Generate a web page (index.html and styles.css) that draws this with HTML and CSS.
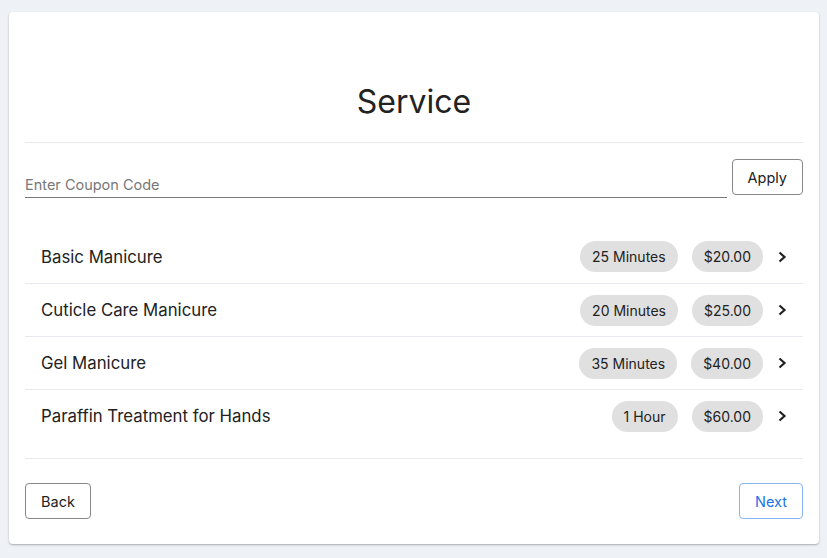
FILE: index.html
```html
<!DOCTYPE html>
<html lang="en">
<head>
    <meta charset="UTF-8">
    <meta name="viewport" content="width=device-width, initial-scale=1.0">
    <title>Service</title>
    <link rel="stylesheet" href="styles.css">
</head>
<body>
    <div class="card">
        <!-- Header -->
        <h1 class="card-title">Service</h1>

        <!-- Coupon -->
        <div class="coupon">
            <input type="text" class="coupon-input" placeholder="Enter Coupon Code">
            <button class="btn">Apply</button>
        </div>

        <!-- Service list -->
        <ul class="service-list">
            <li class="service-item">
                <span class="service-name">Basic Manicure</span>
                <span class="pill">25 Minutes</span>
                <span class="pill">$20.00</span>
                <svg class="chevron" viewBox="0 0 10 12"><path d="M2.5 1.5L7.5 6L2.5 10.5"/></svg>
            </li>
            <li class="service-item">
                <span class="service-name">Cuticle Care Manicure</span>
                <span class="pill">20 Minutes</span>
                <span class="pill">$25.00</span>
                <svg class="chevron" viewBox="0 0 10 12"><path d="M2.5 1.5L7.5 6L2.5 10.5"/></svg>
            </li>
            <li class="service-item">
                <span class="service-name">Gel Manicure</span>
                <span class="pill">35 Minutes</span>
                <span class="pill">$40.00</span>
                <svg class="chevron" viewBox="0 0 10 12"><path d="M2.5 1.5L7.5 6L2.5 10.5"/></svg>
            </li>
            <li class="service-item">
                <span class="service-name">Paraffin Treatment for Hands</span>
                <span class="pill">1 Hour</span>
                <span class="pill">$60.00</span>
                <svg class="chevron" viewBox="0 0 10 12"><path d="M2.5 1.5L7.5 6L2.5 10.5"/></svg>
            </li>
        </ul>

        <!-- Footer -->
        <div class="card-footer">
            <button class="btn">Back</button>
            <button class="btn btn-next">Next</button>
        </div>
    </div>
</body>
</html>
```

FILE: styles.css
```css
:root {
    --page-bg: #eef2f7;
    --text: #222;
    --muted: #777;
    --divider: #e8e8ee;
    --pill-bg: #e0e0e0;
    --blue: #1a73e8;
}

* {
    margin: 0;
    padding: 0;
    box-sizing: border-box;
    font-family: 'Inter', 'Open Sans', sans-serif;
}

body {
    background-color: var(--page-bg);
    color: var(--text);
    padding: 12px 8px 14px 9px;
}

.card {
    background-color: #fff;
    border-radius: 4px;
    box-shadow: 0 1px 2px rgba(0, 0, 0, 0.3);
    padding: 0 16px 25px;
}

.card-title {
    font-size: 32px;
    font-weight: 400;
    text-align: center;
    line-height: 40px;
    padding: 70px 0 20px;
    border-bottom: 1px solid var(--divider);
}

/* Coupon */
.coupon {
    display: flex;
    align-items: flex-start;
    gap: 5px;
    padding-top: 16px;
}

.coupon-input {
    flex: 1;
    border: none;
    border-bottom: 1px solid #777;
    outline: none;
    font-size: 14.5px;
    height: 39px;
    padding: 16px 0 4px;
    color: var(--text);
    background: transparent;
}

.coupon-input::placeholder {
    color: var(--muted);
}

.btn {
    background: #fff;
    border: 1px solid #888;
    border-radius: 4px;
    height: 36px;
    padding: 0 15px;
    font-size: 14.5px;
    color: var(--text);
    cursor: pointer;
}

/* Service list */
.service-list {
    list-style: none;
    margin-top: 32px;
    padding-bottom: 16px;
    border-bottom: 1px solid var(--divider);
}

.service-item {
    display: flex;
    align-items: center;
    gap: 14px;
    height: 53px;
    padding: 0 16px 0 16px;
    border-top: 1px solid var(--divider);
}

.service-item:first-child {
    border-top: none;
}

.service-name {
    flex: 1;
    font-size: 16.8px;
}

.pill {
    background-color: var(--pill-bg);
    border-radius: 16px;
    height: 31px;
    line-height: 31px;
    padding: 0 12px;
    font-size: 14px;
}

.chevron {
    width: 10px;
    height: 12px;
    fill: none;
    stroke: #222;
    stroke-width: 2.2;
}

/* Footer */
.card-footer {
    display: flex;
    justify-content: space-between;
    padding-top: 24px;
}

.btn-next {
    border-color: #8ab4f0;
    color: var(--blue);
}
```
